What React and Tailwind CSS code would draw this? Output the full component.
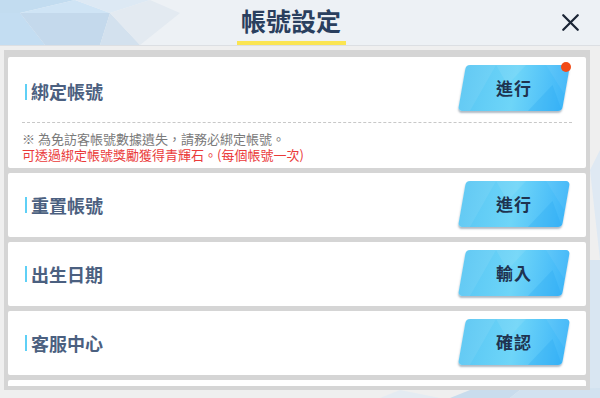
import { X } from 'lucide-react';

const font = { fontFamily: '"Noto Sans CJK TC", "Noto Sans", sans-serif' };

function ActionButton({ label, dot }) {
  return (
    <div className="relative w-[104px] h-[46px] mr-[20px]">
      <div className="absolute inset-0 -skew-x-[10deg] rounded-[4px] overflow-hidden bg-gradient-to-r from-[#59c7f4] via-[#6ed5f8] to-[#3eb6f8] shadow-[0_2px_2px_rgba(30,60,90,0.35)]">
        <svg className="absolute inset-0 w-full h-full" viewBox="0 0 104 46" preserveAspectRatio="none">
          <polygon points="0,0 30,0 12,46 0,46" fill="#ffffff" opacity="0.07" />
          <polygon points="30,0 60,0 45,20" fill="#ffffff" opacity="0.08" />
          <polygon points="70,46 90,20 104,46" fill="#1ea4f0" opacity="0.25" />
          <polygon points="80,0 104,0 104,30" fill="#ffffff" opacity="0.06" />
        </svg>
      </div>
      <span className="relative flex h-full items-center justify-center text-[17px] font-bold text-[#1f3350] tracking-[1px]">{label}</span>
      {dot && <span className="absolute -right-[5px] -top-[3px] w-[10px] h-[10px] rounded-full bg-[#f24b17]" />}
    </div>
  );
}

function Title({ children }) {
  return (
    <div className="flex items-center pl-[17px]">
      <span className="w-[2px] h-[16px] bg-[#5fd0f6] mr-[4px]" />
      <span className="text-[18px] font-semibold text-[#4b6080]">{children}</span>
    </div>
  );
}

function Row({ label, action }) {
  return (
    <div className="h-[64px] shrink-0 bg-white rounded-[2px] flex items-center justify-between">
      <Title>{label}</Title>
      <div className="-mt-[3px]">
        <ActionButton label={action} />
      </div>
    </div>
  );
}

export default function App() {
  return (
    <div className="relative w-[600px] h-[398px] overflow-hidden bg-[#efefef]" style={font}>
      {/* background triangles */}
      <svg className="absolute inset-0 w-[600px] h-[398px]" viewBox="0 0 600 398">
        <rect x="0" y="0" width="600" height="45" fill="#edf1f5" />
        <polygon points="0,0 75,0 20,13 0,13" fill="#c2dcf0" />
        <polygon points="20,13 75,0 110,13" fill="#cfe4f5" />
        <polygon points="0,13 20,13 45,45 0,45" fill="#c3ddf2" />
        <polygon points="20,13 110,13 100,45 45,45" fill="#c4d9ec" />
        <polygon points="110,13 100,45 140,45" fill="#d3e1ee" />
        <polygon points="75,0 150,0 110,13" fill="#dde9f4" />
        <polygon points="110,13 150,0 180,13 140,45" fill="#e3eaf1" />
        <rect x="0" y="45" width="600" height="1" fill="#dcdfe3" />
        <polygon points="590,170 600,150 600,260" fill="#dfe9f3" />
        <polygon points="590,260 600,260 600,398 590,398" fill="#d9e6f2" />
        <polygon points="380,398 400,390 440,398" fill="#e4ebf2" />
        <polygon points="450,398 470,390 520,390 510,398" fill="#c9dced" />
        <polygon points="520,390 600,388 600,398 510,398" fill="#d2e2f0" />
      </svg>

      <div className="relative">
        <header className="h-[45px] flex items-start">
          <div className="flex-1" />
          <div className="flex flex-col items-center w-[109px] -ml-[3px]">
            <span className="h-[41px] flex items-center text-[25px] font-bold text-[#2a3f5e] leading-none">帳號設定</span>
            <span className="w-[109px] h-[4px] bg-[#fbe552]" />
          </div>
          <div className="flex-1 flex justify-end pr-[15px] pt-[8px]">
            <X size={29} strokeWidth={1.9} color="#1b2535" />
          </div>
        </header>

        <div className="mt-[5px] ml-[4px] w-[586px] h-[340px] border-[4px] border-[#d5d5d5] bg-[#d5d5d5] overflow-hidden">
          <div className="flex flex-col gap-[5px] pt-[3px]">
            <div className="h-[111px] shrink-0 bg-white rounded-[2px] flex flex-col">
              <div className="h-[65px] flex items-center justify-between">
                <div className="mt-[4px]">
                  <Title>綁定帳號</Title>
                </div>
                <div className="-mt-[3px]">
                  <ActionButton label="進行" dot />
                </div>
              </div>
              <div className="mx-[14px] border-t border-dashed border-[#c8c8c8]" />
              <div className="pl-[14px] pt-[8px] text-[13px] leading-[16px]">
                <p className="text-[#7a7a7a]">※ 為免訪客帳號數據遺失，請務必綁定帳號。</p>
                <p className="text-[#ea3a3a]">可透過綁定帳號獎勵獲得青輝石。(每個帳號一次)</p>
              </div>
            </div>
            <Row label="重置帳號" action="進行" />
            <Row label="出生日期" action="輸入" />
            <Row label="客服中心" action="確認" />
            <Row label="" action="" />
          </div>
        </div>
      </div>
    </div>
  );
}
